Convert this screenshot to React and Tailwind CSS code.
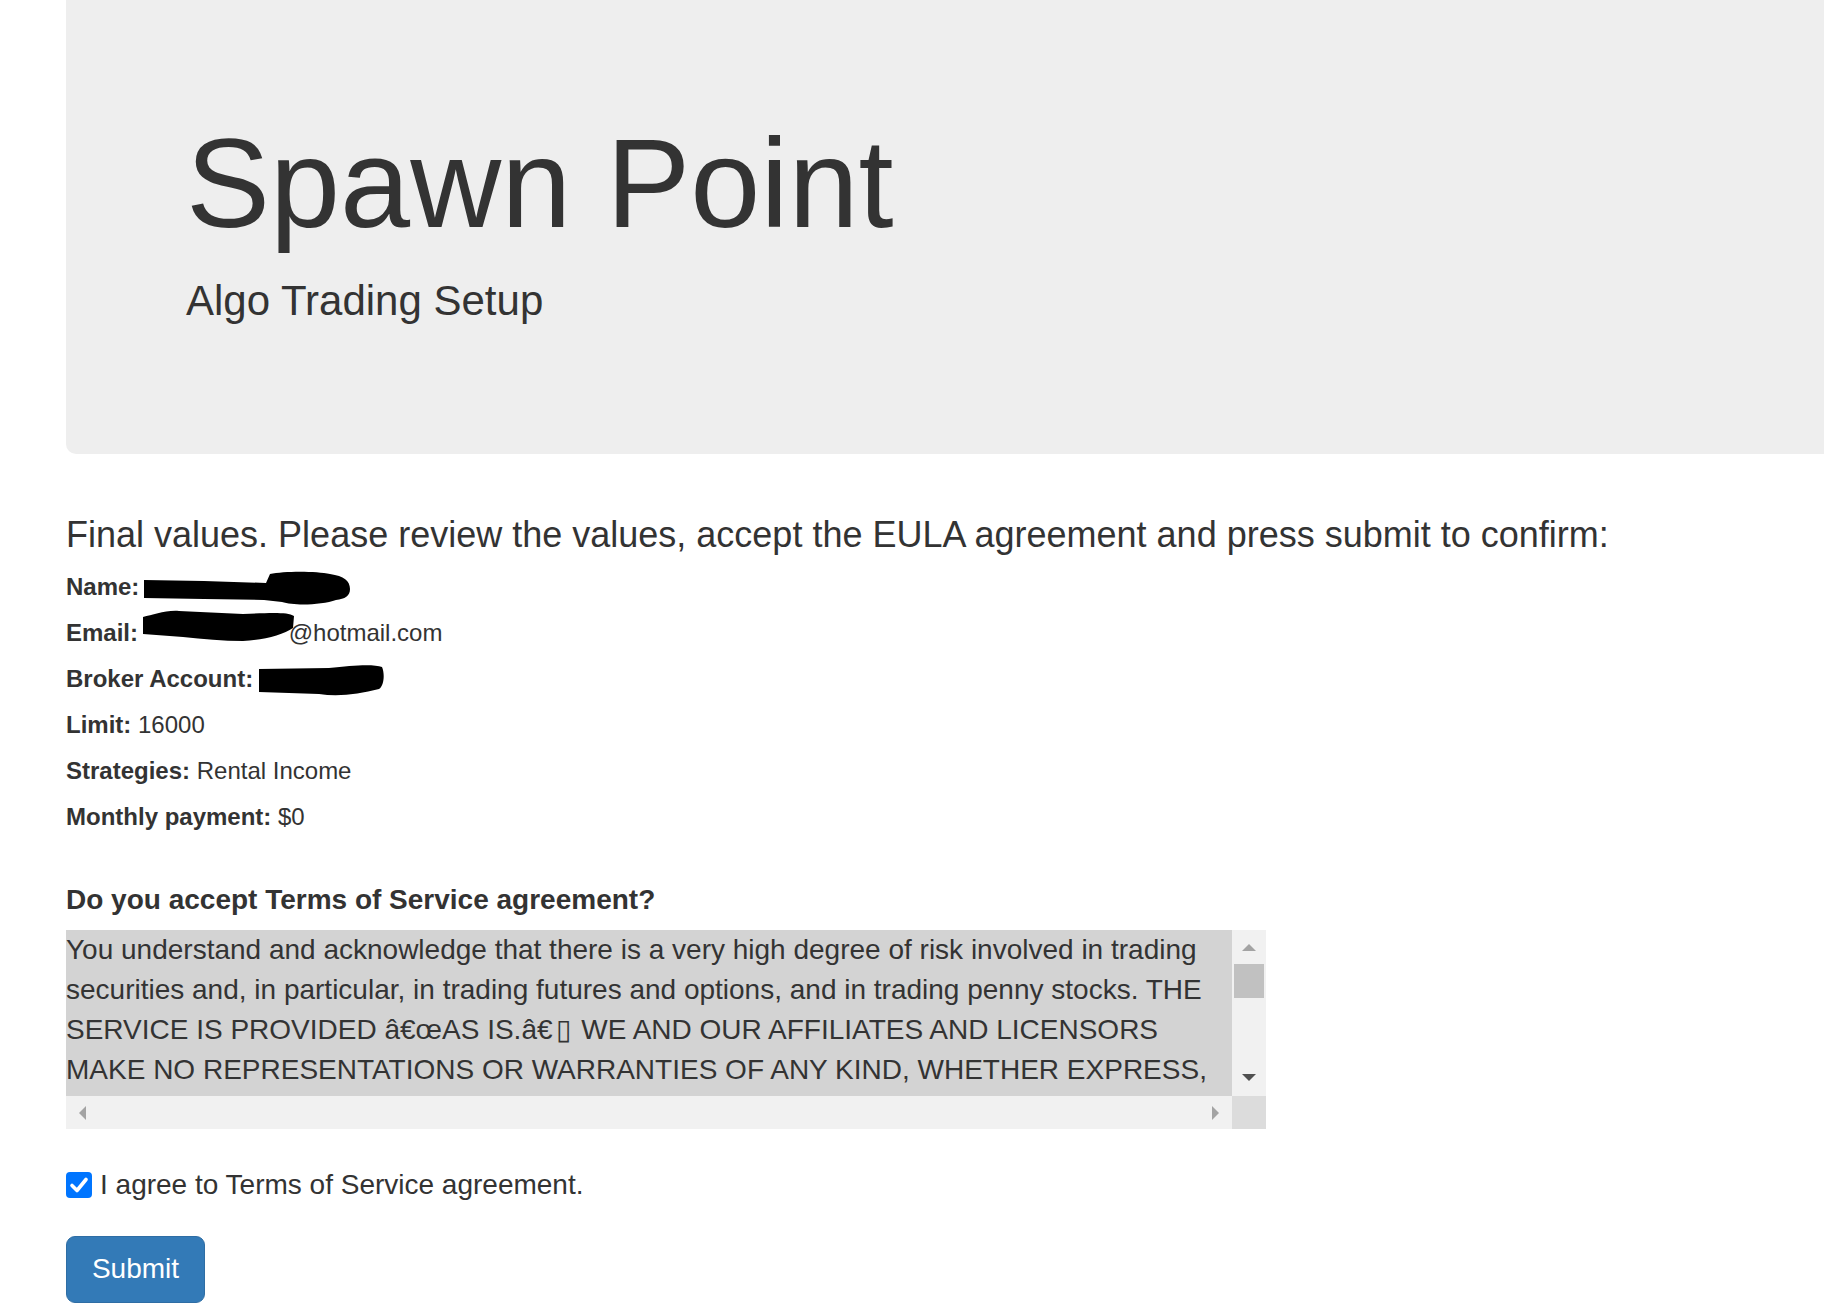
const tosStart =
  "You understand and acknowledge that there is a very high degree of risk involved in trading securities and, in particular, in trading futures and options, and in trading penny stocks. THE SERVICE IS PROVIDED \u00e2\u20ac\u0153AS IS.\u00e2\u20ac";
const tosEnd =
  " WE AND OUR AFFILIATES AND LICENSORS MAKE NO REPRESENTATIONS OR WARRANTIES OF ANY KIND, WHETHER EXPRESS, IMPLIED OR STATUTORY, INCLUDING WITHOUT LIMITATION ANY WARRANTY OF MERCHANTABILITY, FITNESS FOR A PARTICULAR PURPOSE, TITLE OR NON-INFRINGEMENT, OR THAT THE SERVICE WILL BE UNINTERRUPTED OR ERROR FREE.";

// blacked-out values
function Blob({ w, h, d, drop }) {
  return (
    <svg width={w} height={h} viewBox={`0 0 ${w} ${h}`} className={drop}>
      <path d={d} fill="#000" />
    </svg>
  );
}

function Row({ label, children }) {
  return (
    <div className="text-[24px] leading-[46px] text-[#333] whitespace-nowrap">
      <b className="font-bold">{label}</b> {children}
    </div>
  );
}

function FakeTextarea() {
  return (
    <div className="flex w-[1200px] mt-[10px]">
      <div className="flex flex-col w-[1166px]">
        <div className="h-[166px] overflow-hidden bg-[#d3d3d3] text-[28px] leading-[40px] text-[#333]">
          {tosStart}
          <span className="px-[3px]">{"\u25af"}</span>
          {tosEnd}
        </div>
        <div className="h-[33px] bg-[#f1f1f1] flex items-center justify-between px-[13px]">
          <svg width="7" height="14" viewBox="0 0 7 14">
            <path d="M7 0 L0 7 L7 14 Z" fill="#a3a3a3" />
          </svg>
          <svg width="7" height="14" viewBox="0 0 7 14">
            <path d="M0 0 L7 7 L0 14 Z" fill="#a3a3a3" />
          </svg>
        </div>
      </div>
      <div className="flex flex-col w-[34px]">
        <div className="h-[166px] bg-[#f1f1f1] flex flex-col">
          <div className="h-[34px] flex items-center justify-center">
            <svg width="14" height="7" viewBox="0 0 14 7">
              <path d="M0 7 L7 0 L14 7 Z" fill="#a3a3a3" />
            </svg>
          </div>
          <div className="h-[34px] mx-[2px] bg-[#c1c1c1]" />
          <div className="flex-1" />
          <div className="h-[34px] flex items-center justify-center pb-[4px]">
            <svg width="14" height="7" viewBox="0 0 14 7">
              <path d="M0 0 L14 0 L7 7 Z" fill="#505050" />
            </svg>
          </div>
        </div>
        <div className="h-[33px] bg-[#dcdcdc]" />
      </div>
    </div>
  );
}

export default function App() {
  return (
    <div className="min-h-screen bg-white pl-[66px] font-['Liberation_Sans',Arial,sans-serif] text-[#333] overflow-hidden">
      {/* Jumbotron */}
      <div className="h-[454px] bg-[#eeeeee] rounded-bl-[10px] pl-[120px] pt-[115px]">
        <h1 className="text-[126px] leading-[138.6px] font-normal text-[#333] whitespace-nowrap">
          Spawn Point
        </h1>
        <p className="mt-[17px] text-[42px] leading-[60px] text-[#333]">Algo Trading Setup</p>
      </div>

      <h3 className="mt-[61px] text-[36px] leading-[40px] font-normal whitespace-nowrap">
        Final values. Please review the values, accept the EULA agreement and press submit to
        confirm:
      </h3>

      <div className="mt-[9px]">
        <Row label="Name:">
          <Blob
            w={206}
            h={34}
            drop="inline-block align-[-10px] -ml-[2px]"
            d="M0 9 L60 10 L122 12 L126 3 C140 0 172 0 186 3 C200 5 206 10 206 18 C206 25 201 28 192 29 C178 34 150 35 138 31 L120 29 L60 28 L0 27 Z"
          />
        </Row>
        <Row label="Email:">
          <span className="inline-flex items-baseline">
            <Blob
              w={151}
              h={31}
              drop="inline-block align-[-8px] -ml-[2px] -mr-[5px]"
              d="M0 7 C10 5 22 0 36 1 L100 4 C128 3 144 2 151 6 L150 18 C140 25 120 30 100 31 C80 31 60 29 40 27 L0 24 Z"
            />
            @hotmail.com
          </span>
        </Row>
        <Row label="Broker Account:">
          <Blob
            w={125}
            h={33}
            drop="inline-block align-[-10px] -ml-[1px]"
            d="M0 5 L70 4 C95 1 115 0 123 3 C126 10 125 22 120 25 C100 30 80 33 60 30 L0 28 Z"
          />
        </Row>
        <Row label="Limit:">16000</Row>
        <Row label="Strategies:">Rental Income</Row>
        <Row label="Monthly payment:">$0</Row>
      </div>

      <h4 className="mt-[40px] text-[28px] leading-[40px] font-bold">
        Do you accept Terms of Service agreement?
      </h4>

      <FakeTextarea />

      <label className="mt-[36px] flex items-center gap-[8px] text-[28px] leading-[40px]">
        <span className="w-[26px] h-[26px] rounded-[4px] bg-[#0075ff] flex items-center justify-center">
          <svg width="26" height="26" viewBox="0 0 26 26">
            <path
              d="M6 13.5 L11 18.5 L20 7.5"
              fill="none"
              stroke="#fff"
              strokeWidth="3.6"
              strokeLinecap="round"
              strokeLinejoin="round"
            />
          </svg>
        </span>
        I agree to Terms of Service agreement.
      </label>

      <button className="mt-[31px] w-[139px] h-[67px] rounded-[9px] bg-[#337ab7] border-[1.5px] border-[#2e6da4] text-white text-[28px] leading-[40px] pb-[2px]">
        Submit
      </button>
    </div>
  );
}
